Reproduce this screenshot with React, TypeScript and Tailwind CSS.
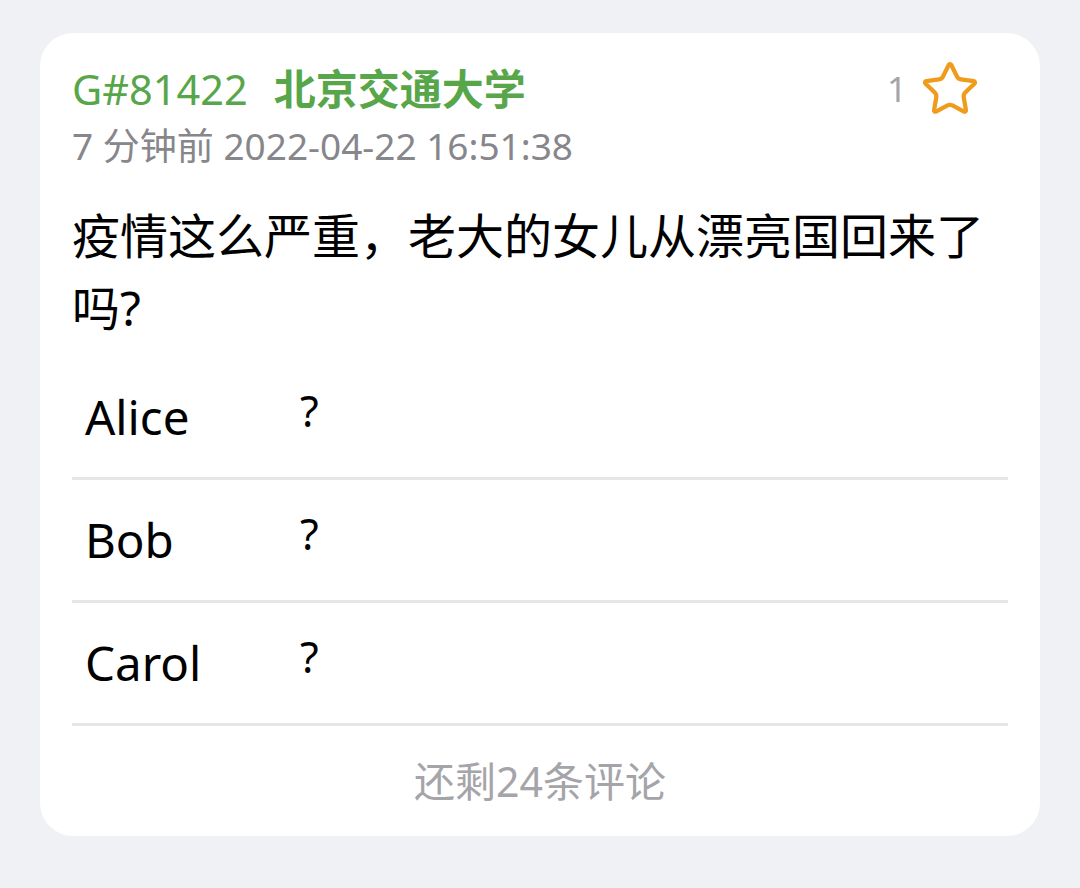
import React from 'react'
import { Star } from 'lucide-react'

type Comment = {
    id: number,
    name: string,
    text: string
}

const comments: Comment[] = [
    { id: 1, name: 'Alice', text: '?' },
    { id: 2, name: 'Bob', text: '?' },
    { id: 3, name: 'Carol', text: '?' },
]

const font = { fontFamily: '"Noto Sans", "Noto Sans CJK SC", sans-serif' }

const App = () => {
    return (
        <div className='min-h-[888px] w-[1080px] bg-[#f0f1f5] pt-[33px] px-[40px]' style={font}>
            <div className='bg-white rounded-[33px] px-[32px] pt-[28px]'>

                {/* header */}
                <div className='flex items-center h-[56px]'>
                    <span className='text-[41.5px] leading-[56px] text-[#58a64a]'>G#81422</span>
                    <span className='ml-[26px] text-[42px] leading-[56px] font-bold text-[#58a64a]'>北京交通大学</span>
                    <span className='ml-auto text-[35px] leading-[56px] text-[#a4a4aa]'>1</span>
                    <Star size={60} strokeWidth={1.7} color='#ef9b1c' className='ml-[13px] mr-[28px]' />
                </div>

                <p className='mt-[5px] text-[37px] leading-[48px] text-[#86868b]'>7 分钟前 2022-04-22 16:51:38</p>

                <p className='mt-[30px] text-[48px] leading-[72px] text-black'>
                    疫情这么严重，老大的女儿从漂亮国回来了吗?
                </p>

                <div className='mt-[13px]'>
                    {comments.map((c) => {
                        return (
                            <div key={c.id} className='flex items-center h-[123px] border-b-[3px] border-[#e6e6e9]'>
                                <span className='w-[228px] pl-[13px] text-[47.5px] leading-[60px] text-black'>{c.name}</span>
                                <span className='pb-[12px] text-[43px] leading-[56px] text-black'>{c.text}</span>
                            </div>
                        )
                    })}
                </div>

                <div className='flex items-center justify-center h-[110px]'>
                    <span className='text-[41px] leading-[52px] text-[#a4a4a9]'>还剩24条评论</span>
                </div>
            </div>
        </div>
    )
}

export default App
